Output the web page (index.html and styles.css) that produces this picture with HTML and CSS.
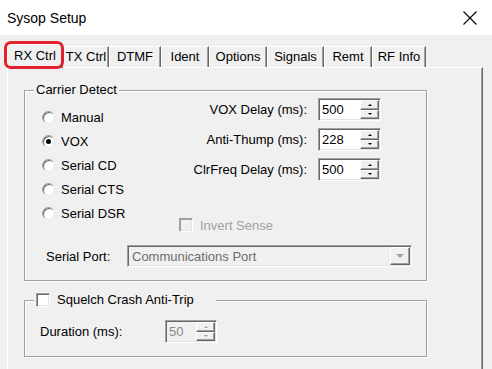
FILE: index.html
```html
<!DOCTYPE html>
<html lang="en">
<head>
  <meta charset="UTF-8">
  <title>Sysop Setup</title>
  <link rel="stylesheet" href="styles.css">
</head>
<body>

<!-- Title Bar -->
<div class="titlebar">
  <span class="title">Sysop Setup</span>
  <svg class="close" width="14" height="14" viewBox="0 0 14 14">
    <path d="M0.5 0.5 L13.5 13.5 M13.5 0.5 L0.5 13.5" stroke="#000" stroke-width="1.1" fill="none"/>
  </svg>
</div>

<!-- Tabs -->
<div class="tabs">
  <div class="tab active w-rx">RX Ctrl<span class="mark"></span></div>
  <div class="tab w-tx">TX Ctrl</div>
  <div class="tab w-dtmf">DTMF</div>
  <div class="tab w-ident">Ident</div>
  <div class="tab w-options">Options</div>
  <div class="tab w-signals">Signals</div>
  <div class="tab w-remt">Remt</div>
  <div class="tab w-rf">RF Info</div>
</div>

<!-- Tab Page -->
<div class="panel">

  <fieldset class="group carrier">
    <legend>Carrier Detect</legend>
    <div class="top">
      <div class="radios">
        <div class="radio"><span class="circle"></span>Manual</div>
        <div class="radio"><span class="circle checked"></span>VOX</div>
        <div class="radio"><span class="circle"></span>Serial CD</div>
        <div class="radio"><span class="circle"></span>Serial CTS</div>
        <div class="radio"><span class="circle"></span>Serial DSR</div>
      </div>
      <div class="right">
        <div class="spins">
          <span class="lbl">VOX Delay (ms):</span>
          <div class="spin"><span class="val">500</span><div class="arrows"><span class="up"></span><span class="down"></span></div></div>
          <span class="lbl">Anti-Thump (ms):</span>
          <div class="spin"><span class="val">228</span><div class="arrows"><span class="up"></span><span class="down"></span></div></div>
          <span class="lbl">ClrFreq Delay (ms):</span>
          <div class="spin"><span class="val">500</span><div class="arrows"><span class="up"></span><span class="down"></span></div></div>
        </div>
        <div class="check disabled"><span class="box"></span>Invert Sense</div>
      </div>
    </div>
    <div class="port-row">
      <span class="port-lbl">Serial Port:</span>
      <div class="combo">
        <span class="combo-text">Communications Port</span>
        <span class="drop"><span class="tri"></span></span>
      </div>
    </div>
  </fieldset>

  <fieldset class="group squelch">
    <legend><span class="box"></span>Squelch Crash Anti-Trip</legend>
    <div class="duration-row">
      <span class="dur-lbl">Duration (ms):</span>
      <div class="spin small disabled"><span class="val">50</span><div class="arrows"><span class="up"></span><span class="down"></span></div></div>
    </div>
  </fieldset>

</div>

</body>
</html>
```

FILE: styles.css
```css
/* General */
* {
  box-sizing: border-box;
}
body {
  margin: 0;
  width: 492px;
  height: 369px;
  overflow: hidden;
  background-color: #f0f0f0;
  font-family: "Liberation Sans", Arial, sans-serif;
  font-size: 13px;
  color: #000;
}

/* Title Bar */
.titlebar {
  height: 35px;
  background-color: #fff;
  display: flex;
  align-items: center;
  justify-content: space-between;
  padding: 0 15px 0 7px;
}
.title {
  font-size: 14px;
}
.close {
  display: block;
}

/* Tabs */
.tabs {
  display: flex;
  align-items: flex-end;
  height: 24px;
  margin: 8px 0 0 7px;
  position: relative;
  z-index: 1;
}
.tab {
  height: 21px;
  line-height: 20px;
  text-align: center;
  border-top: 1px solid #fff;
  border-left: 1px solid #fff;
  border-right: 1px solid #696969;
  box-shadow: inset -1px 0 #a0a0a0;
  white-space: nowrap;
}
.tab.active {
  position: relative;
  height: 24px;
  line-height: 22px;
  margin-bottom: -1px;
  background-color: #f0f0f0;
}
.mark {
  position: absolute;
  left: -4px;
  top: -4px;
  width: 60px;
  height: 28px;
  border: 3px solid #e3202b;
  border-radius: 7px;
}
.w-rx { width: 56px; }
.w-tx { width: 46px; }
.w-dtmf { width: 52px; }
.w-ident { width: 48px; }
.w-options { width: 58px; }
.w-signals { width: 57px; }
.w-remt { width: 48px; }
.w-rf { width: 54px; }

/* Tab page */
.panel {
  width: 476px;
  height: 310px;
  margin-left: 7px;
  border-top: 1px solid #fff;
  border-left: 1px solid #fff;
  border-right: 1px solid #696969;
  box-shadow: inset -1px 0 #a0a0a0;
  padding: 14px 0 0 16px;
}

/* Group boxes */
.group {
  width: 403px;
  margin: 0;
  border: 1px solid #a0a0a0;
  box-shadow: inset 1px 1px #fff, 1px 1px #fff;
  padding: 0 0 13px 9px;
}
.group legend {
  padding: 0 2px;
  line-height: 16px;
  background-color: #f0f0f0;
}
.squelch {
  margin-top: 11px;
  padding-top: 12px;
}
.squelch legend {
  width: 182px;
  padding: 0 0 0 2px;
  display: flex;
  align-items: center;
  gap: 7px;
}

.top {
  display: flex;
}
.radios {
  width: 145px;
  padding: 9px 0 0 8px;
  display: flex;
  flex-direction: column;
  gap: 4px;
}
.radio {
  height: 20px;
  display: flex;
  align-items: center;
  gap: 6px;
}
.circle {
  width: 13px;
  height: 13px;
  border-radius: 50%;
  background-color: #fff;
  border: 1px solid;
  border-color: #a0a0a0 #e3e3e3 #e3e3e3 #a0a0a0;
  box-shadow: inset 1px 1px #696969;
  display: flex;
  align-items: center;
  justify-content: center;
}
.circle.checked::after {
  content: "";
  width: 5px;
  height: 5px;
  border-radius: 50%;
  background-color: #000;
}

.right {
  width: 202px;
  display: flex;
  flex-direction: column;
}
.spins {
  display: grid;
  grid-template-columns: auto 63px;
  column-gap: 11px;
  row-gap: 7px;
  justify-content: end;
  align-items: center;
}
.lbl {
  justify-self: end;
}

/* Spin box */
.spin {
  width: 63px;
  height: 23px;
  display: flex;
  background-color: #fff;
  border: 1px solid;
  border-color: #a0a0a0 #fff #fff #a0a0a0;
  box-shadow: inset 1px 1px #696969, inset -1px -1px #e3e3e3;
}
.spin .val {
  flex: 1;
  padding: 2px 0 0 3px;
  line-height: 17px;
}
.arrows {
  width: 19px;
  margin: 1px 1px 1px 0;
  display: flex;
  flex-direction: column;
}
.arrows span {
  flex: 1;
  background-color: #f0f0f0;
  border: 1px solid;
  border-color: #fff #696969 #696969 #fff;
  box-shadow: inset -1px -1px #a0a0a0;
  display: flex;
  align-items: center;
  justify-content: center;
}
.arrows span::after {
  content: "";
  border-left: 2px solid transparent;
  border-right: 2px solid transparent;
}
.arrows .up::after {
  border-bottom: 2px solid #000;
}
.arrows .down::after {
  border-top: 2px solid #000;
}
.spin.small {
  width: 52px;
}
.spin.disabled {
  background-color: #f0f0f0;
  color: #8a8a8a;
}
.spin.disabled .arrows .up::after {
  border-bottom-color: #a0a0a0;
}
.spin.disabled .arrows .down::after {
  border-top-color: #a0a0a0;
}

/* Check boxes */
.check {
  margin-top: 37px;
  height: 14px;
  display: flex;
  align-items: center;
  gap: 7px;
}
.box {
  width: 14px;
  height: 14px;
  background-color: #fff;
  border: 1px solid;
  border-color: #a0a0a0 #fff #fff #a0a0a0;
  box-shadow: inset 1px 1px #696969, inset -1px -1px #e3e3e3;
}
.check.disabled {
  color: #a0a0a0;
}
.check.disabled .box {
  background-color: #f0f0f0;
  box-shadow: inset 1px 1px #a0a0a0, inset -1px -1px #e3e3e3;
}

/* Serial port */
.port-row {
  margin-top: 13px;
  display: flex;
  align-items: center;
  padding-left: 12px;
}
.port-lbl {
  width: 81px;
}
.combo {
  width: 285px;
  height: 22px;
  display: flex;
  align-items: center;
  justify-content: space-between;
  border: 1px solid;
  border-color: #a0a0a0 #fff #fff #a0a0a0;
  box-shadow: inset 1px 1px #696969, inset -1px -1px #e3e3e3;
  padding: 0 1px 0 4px;
}
.combo-text {
  color: #6d6d6d;
}
.drop {
  width: 20px;
  height: 18px;
  border: 1px solid;
  border-color: #fff #696969 #696969 #fff;
  box-shadow: inset -1px -1px #a0a0a0;
  display: flex;
  align-items: center;
  justify-content: center;
}
.tri {
  border-left: 4px solid transparent;
  border-right: 4px solid transparent;
  border-top: 4px solid #a0a0a0;
}

/* Duration */
.duration-row {
  height: 23px;
  display: flex;
  align-items: center;
  padding-left: 6px;
}
.dur-lbl {
  width: 125px;
}
```
